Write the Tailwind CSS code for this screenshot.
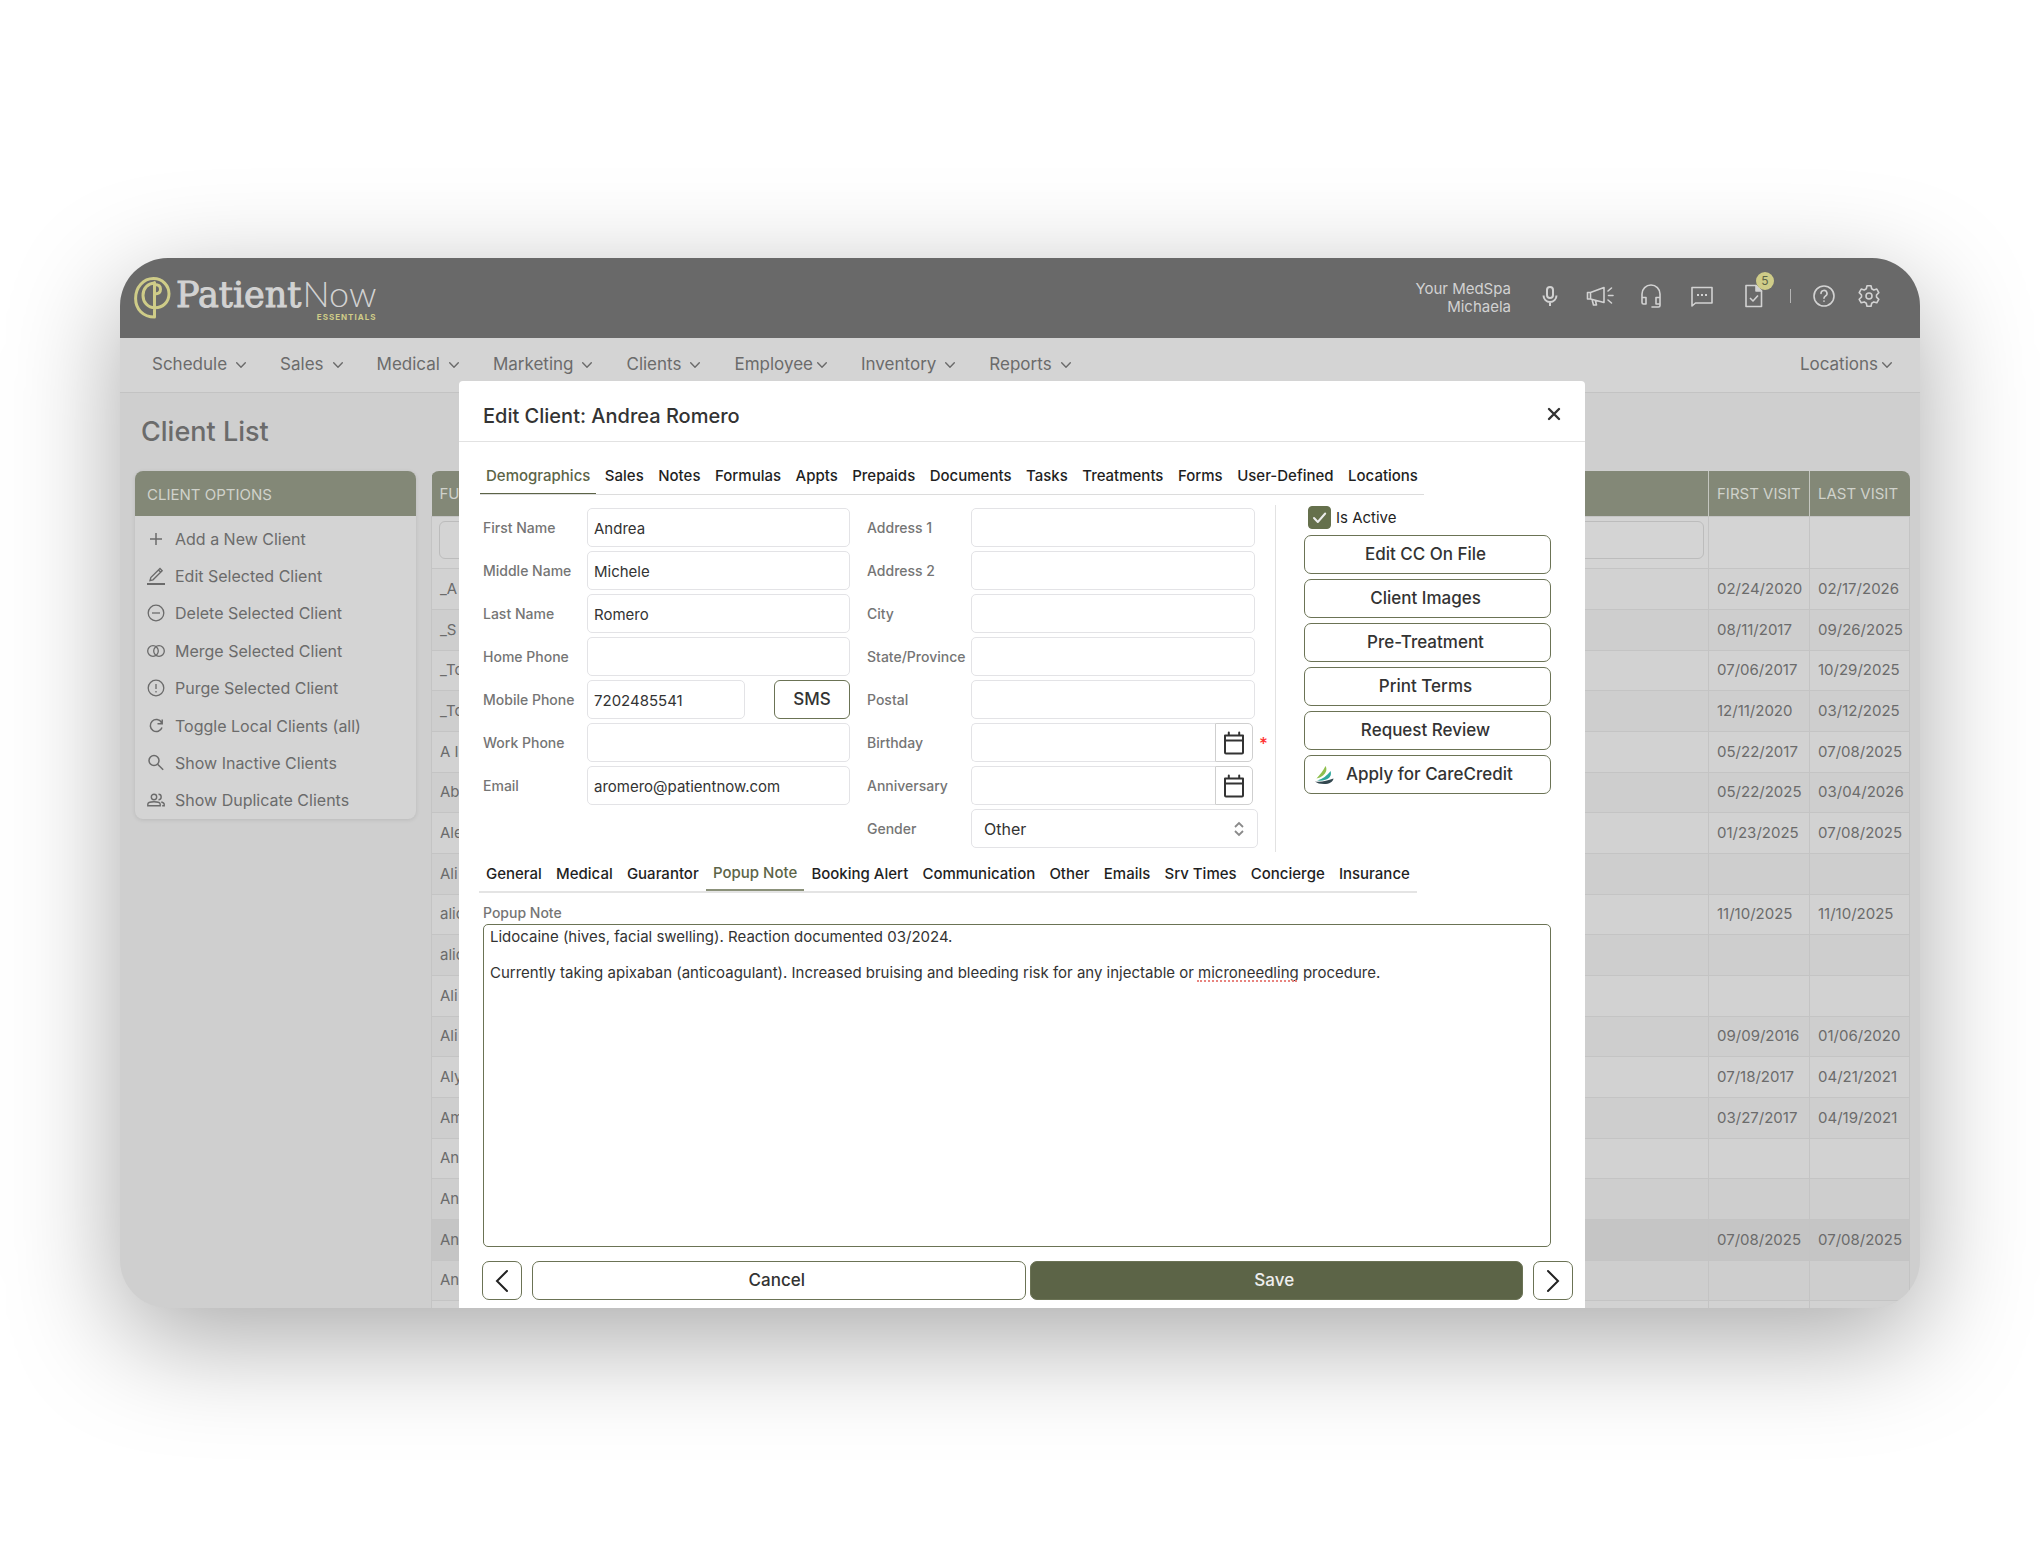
<!DOCTYPE html>
<html lang="en">
<head>
<meta charset="utf-8">
<meta name="viewport" content="width=device-width, initial-scale=1">
<title>PatientNow Essentials - Client List</title>
<script src="https://cdn.jsdelivr.net/npm/@tailwindcss/browser@4"></script>
</head>
<body class="min-h-screen bg-white px-[120px] py-[258px] font-['Inter',sans-serif] text-[#6b6b6b]">
<svg class="hidden" aria-hidden="true">
  <symbol id="chev" viewBox="0 0 10 10"><path d="M.7 2.8 5 7.2 9.3 2.8" fill="none" stroke="currentColor" stroke-width="1.4" stroke-linecap="round" stroke-linejoin="round"/></symbol>
  <symbol id="cal" viewBox="0 0 22 24"><path d="M2 4.5h18v17a1 1 0 0 1-1 1H3a1 1 0 0 1-1-1zM2 9.500h18M5.800 1.500v3M16.200 1.500v3" fill="none" stroke="currentColor" stroke-width="2" stroke-linejoin="round" stroke-linecap="round"/></symbol>
</svg>
<div class="relative h-[1050px] overflow-hidden rounded-[48px] bg-[#cfcfcf] shadow-[0_31px_110px_rgba(0,0,0,0.34)]" id="window">
  <header class="flex h-20 items-center justify-between bg-[#696969] pr-[39px] pl-[14px] text-[#d2d2d2]">
    <a href="#" class="flex items-center gap-[5px]" aria-label="PatientNow Essentials">
      <svg class="h-[42px] w-[37px]" viewBox="0 0 37 42" fill="none" stroke="#cfcc88" stroke-width="3" stroke-linecap="round" stroke-linejoin="round"><path d="M20.5 5.5V40C9 40 1.600 32 1.600 21.500C1.600 10 9.500 1.600 19.500 1.600C28.500 1.600 35 8.500 35 16.800C35 25 28.800 30.800 21 30.800C13.500 30.800 9 25 9 18.500C9 11.500 13.500 6.500 20.500 6"/><path d="M20.500 7.500C24.500 7.500 26.500 9.500 26.500 12.300C26.500 15.200 24.500 17 20.500 17"/></svg>
      <span class="flex flex-col items-end pt-[2px] whitespace-nowrap">
        <span class="flex items-baseline gap-px leading-8">
          <span class="font-['DejaVu_Serif',serif] text-[35px] [-webkit-text-stroke:1px_#d2d2d2]">Patient</span><span class="font-['Lato',sans-serif] text-[36px] font-light">Now</span>
        </span>
        <span class="pt-px text-[8px] leading-[10px] font-bold tracking-[1px] text-[#cfcc88]">ESSENTIALS</span>
      </span>
    </a>
    <div class="flex items-center">
      <p class="pr-[29px] text-right text-[15px] leading-[18px]">Your MedSpa<br>Michaela</p>
      <div class="flex items-center gap-[26px] pb-1">
        <button aria-label="Dictate" class="w-5"><svg class="mx-auto h-6 w-5" viewBox="0 0 20 24" fill="none" stroke="currentColor" stroke-width="2"><rect x="7" y="3" width="6" height="11" rx="3"/><path d="M3.500 11.500a6.500 6.500 0 0 0 13 0M10 18v4"/></svg></button>
        <button aria-label="Announcements"><svg class="h-[22px] w-[28px]" viewBox="0 0 28 22" fill="none" stroke="currentColor" stroke-width="1.600" stroke-linecap="round" stroke-linejoin="round"><path d="M1.500 7.500h3L18 2.500v15L4.500 14h-3zM4.500 7.500V14M6 14.500l1.500 5.500h3L9.500 16M22 6l3.500-3M22.500 10.500H27M22 15l3.500 3"/></svg></button>
        <button aria-label="Support"><svg class="h-6 w-[22px]" viewBox="0 0 22 24" fill="none" stroke="currentColor" stroke-width="1.600" stroke-linecap="round" stroke-linejoin="round"><path d="M2 14V10a9 9 0 0 1 18 0v11.500a1.500 1.500 0 0 1-1.500 1.500H12M2 13.500h4V20H3.500A1.500 1.500 0 0 1 2 18.500zM20 13.500h-4V20h4"/></svg></button>
        <button aria-label="Messages" class="ml-[2px]"><svg class="h-[22px] w-6" viewBox="0 0 24 22" fill="none" stroke="currentColor" stroke-width="1.600" stroke-linejoin="round"><path d="M2 2.500h20v15.500H5.500L2 21z"/><path d="M7 10h2M11 10h2M15 10h2" stroke-width="2"/></svg></button>
        <button aria-label="Tasks, 5 open" class="relative ml-1"><svg class="h-6 w-5" viewBox="0 0 20 24" fill="none" stroke="currentColor" stroke-width="1.600" stroke-linejoin="round"><path d="M12 1.500H2v21h15.500V7z"/><path d="M12 1.500V7h5.500z" fill="currentColor"/><path d="M6 14l3 3 5-5.500"/></svg><span class="absolute -top-[12px] left-[12px] size-[18px] rounded-full bg-[#cfcc88] text-center text-[12px] leading-[18px] text-[#5c6447]">5</span></button>
        <div class="flex items-center gap-[21px]">
          <span class="h-[14px] w-px bg-[#b5b5b5]"></span>
          <button aria-label="Help"><svg class="size-6" viewBox="0 0 24 24" fill="none" stroke="currentColor" stroke-width="1.600" stroke-linecap="round"><circle cx="12" cy="12" r="10"/><path d="M9 9.500a3 3 0 1 1 4.500 2.500C12.500 12.700 12 13 12 14.200M12 17v.3"/></svg></button>
          <button aria-label="Settings"><svg class="size-6" viewBox="0 0 24 24" fill="none" stroke="currentColor" stroke-width="1.600" stroke-linejoin="round"><path d="M10 1.800h4l.7 3 2.100 1.200 3-.9 2 3.500L19.500 11v2.100l2.300 2.200-2 3.500-3-.9-2.100 1.300-.7 3h-4l-.7-3-2.100-1.300-3 .9-2-3.500L4.500 13V11L2.200 8.600l2-3.500 3 .9L9.300 4.800z"/><circle cx="12" cy="12" r="3"/></svg></button>
        </div>
      </div>
    </div>
  </header>

  <nav class="flex h-[55px] items-center justify-between border-b border-[#c3c3c3] bg-[#d4d4d4] pr-[28px] pl-8 text-[17px]">
    <ul class="flex items-center gap-[34px]">
      <li><a href="#" class="flex items-center gap-[9px]">Schedule<svg class="size-[10px]"><use href="#chev"/></svg></a></li>
      <li><a href="#" class="flex items-center gap-[9px]">Sales<svg class="size-[10px]"><use href="#chev"/></svg></a></li>
      <li><a href="#" class="flex items-center gap-[9px]">Medical<svg class="size-[10px]"><use href="#chev"/></svg></a></li>
      <li><a href="#" class="flex items-center gap-[9px]">Marketing<svg class="size-[10px]"><use href="#chev"/></svg></a></li>
      <li><a href="#" class="flex items-center gap-[9px]">Clients<svg class="size-[10px]"><use href="#chev"/></svg></a></li>
      <li><a href="#" class="flex items-center gap-1">Employee<svg class="size-[10px]"><use href="#chev"/></svg></a></li>
      <li><a href="#" class="flex items-center gap-[9px]">Inventory<svg class="size-[10px]"><use href="#chev"/></svg></a></li>
      <li><a href="#" class="flex items-center gap-[9px]">Reports<svg class="size-[10px]"><use href="#chev"/></svg></a></li>
    </ul>
    <a href="#" class="flex items-center gap-1">Locations<svg class="size-[10px]"><use href="#chev"/></svg></a>
  </nav>

  <main class="pr-[10px] pl-[15px]">
    <h1 class="pt-[21px] pl-[6px] text-[27px] leading-9 font-medium">Client List</h1>
    <div class="flex items-start gap-[15px] pt-[21px]">
      <aside class="w-[281px] shrink-0 overflow-hidden rounded-lg bg-[#d4d4d4] shadow-[0_1px_4px_rgba(0,0,0,0.1)]">
        <h2 class="h-[45px] bg-[#838877] pl-3 text-[15px] leading-[47px] text-[#d0d2cb]">CLIENT OPTIONS</h2>
        <ul class="flex h-[303px] flex-col pt-1 pl-3 text-[16px] [&_a]:flex [&_a]:h-full [&_a]:items-center [&_a]:gap-[10px] [&_li]:flex-1 [&_svg]:size-[18px] [&_svg]:fill-none [&_svg]:stroke-current">
          <li><a href="#"><svg viewBox="0 0 18 18" stroke-width="1.500"><path d="M9 3v12M3 9h12"/></svg>Add a New Client</a></li>
          <li><a href="#"><svg viewBox="0 0 18 18" stroke-width="1.300"><path d="M0 17h18" stroke-width="2"/><path d="M3 13.500l.8-3L13 1.500l2.200 2.200L6 12.800zM11.500 3l2.200 2.200"/></svg>Edit Selected Client</a></li>
          <li><a href="#"><svg viewBox="0 0 18 18" stroke-width="1.300"><circle cx="9" cy="9" r="7.800"/><path d="M5 9h8"/></svg>Delete Selected Client</a></li>
          <li><a href="#"><svg viewBox="0 0 18 18" stroke-width="1.300"><circle cx="6" cy="9" r="5.300"/><circle cx="12" cy="9" r="5.300"/></svg>Merge Selected Client</a></li>
          <li><a href="#"><svg viewBox="0 0 18 18" stroke-width="1.300"><circle cx="9" cy="9" r="7.800"/><path d="M9 5v5M9 12v1.500"/></svg>Purge Selected Client</a></li>
          <li><a href="#"><svg viewBox="0 0 18 18" stroke-width="1.500"><path d="M14.500 5.500A6 6 0 1 0 15 10.500M15.200 2.500V6.800H10.500"/></svg>Toggle Local Clients (all)</a></li>
          <li><a href="#"><svg viewBox="0 0 18 18" stroke-width="1.500"><circle cx="7" cy="6.500" r="5"/><path d="M10.600 10.200l5.600 5.600"/></svg>Show Inactive Clients</a></li>
          <li><a href="#"><svg viewBox="0 0 18 18" stroke-width="1.400"><circle cx="7" cy="6" r="2.700"/><path d="M.8 14.800v-1.500C.8 11.500 4 10.800 7 10.800s6.200.7 6.200 2.500v1.500zM11.500 3.300a2.700 2.700 0 0 1 0 5.400M14.300 11c1.800.4 2.900 1.200 2.900 2.300v1.500h-2"/></svg>Show Duplicate Clients</a></li>
        </ul>
      </aside>
      <div class="flex-1 overflow-hidden rounded-t-lg">
        <table class="w-full table-fixed border-collapse text-left text-[15px]">
          <colgroup><col><col class="w-[101px]"><col class="w-[100px]"></colgroup>
          <thead>
            <tr class="h-[45px] bg-[#838877] text-[#d0d2cb] [&>th]:pt-[2px] [&>th]:pl-2 [&>th]:font-normal [&>th+th]:border-l [&>th+th]:border-[#c4c6bf]">
              <th>FULL NAME</th><th>FIRST VISIT</th><th>LAST VISIT</th>
            </tr>
            <tr class="h-[52px] bg-[#d4d4d4] [&>td]:border [&>td]:border-[#c4c4c4]"><td class="pr-1 pb-1 pl-[7px]"><input aria-label="Filter by name" class="block h-[38px] w-full rounded-md border border-[#bcbcbc] bg-transparent"></td><td></td><td></td></tr>
          </thead>
          <tbody id="rows"></tbody>
        </table>
      </div>
    </div>
  </main>

  <section role="dialog" aria-labelledby="dlg" class="absolute top-[123px] bottom-0 left-[339px] w-[1126px] rounded-t-[4px] bg-white text-[#333]">
    <div class="flex h-[61px] items-center justify-between border-b border-[#e2e2e2] pt-[9px] pr-[22px] pl-6">
      <h2 id="dlg" class="text-[20px] font-medium">Edit Client: Andrea Romero</h2>
      <button aria-label="Close" class="pb-1"><svg class="size-[18px]" viewBox="0 0 18 18" stroke="#333" stroke-width="2.400" stroke-linecap="round"><path d="M4 4l10 10M14 4 4 14"/></svg></button>
    </div>
    <div class="pr-[34px] pl-6">
      <div class="ml-[-3px] pt-[17px]">
        <div role="tablist" class="flex w-[944px] justify-between border-b border-[#dcdcdc] text-[15px] font-medium text-[#1f1f1f] [&>button]:h-[35px] [&>button]:px-[6px]">
          <button role="tab" aria-selected="true" class="-mb-px border-b border-[#5c6447] text-[#5c6447]">Demographics</button><button role="tab">Sales</button><button role="tab">Notes</button><button role="tab">Formulas</button><button role="tab">Appts</button><button role="tab">Prepaids</button><button role="tab">Documents</button><button role="tab">Tasks</button><button role="tab">Treatments</button><button role="tab">Forms</button><button role="tab">User-Defined</button><button role="tab">Locations</button>
        </div>
      </div>
      <form class="flex pt-[10px]" id="client">
        <div class="flex border-r border-[#e2e2e2] pt-[3px] pr-[17px] pb-1">
          <div class="grid auto-rows-[39px] grid-cols-[104px_263px] content-start items-center gap-y-1 text-[15px] [&_input]:h-full [&_input]:rounded-[5px] [&_input]:border [&_input]:border-[#e3e3e6] [&_input]:px-[6px] [&_input]:pt-[2px] [&_label]:text-[14px] [&_label]:font-medium [&_label]:text-[#757575]">
            <label for="fn">First Name</label><input id="fn" value="Andrea">
            <label for="mn">Middle Name</label><input id="mn" value="Michele">
            <label for="ln">Last Name</label><input id="ln" value="Romero">
            <label for="hp">Home Phone</label><input id="hp">
            <label for="mp">Mobile Phone</label><div class="flex h-full justify-between"><input id="mp" value="7202485541" class="w-[158px]"><button type="button" class="w-[76px] rounded-[6px] border border-[#6b7355] text-[17px] font-medium">SMS</button></div>
            <label for="wp">Work Phone</label><input id="wp">
            <label for="em">Email</label><input id="em" value="aromero@patientnow.com">
          </div>
          <div class="ml-[17px] grid auto-rows-[39px] grid-cols-[104px_287px] items-center gap-y-1 text-[15px] [&_input]:h-full [&_input]:rounded-[5px] [&_input]:border [&_input]:border-[#e3e3e6] [&_input]:px-[6px] [&_label]:text-[14px] [&_label]:font-medium [&_label]:text-[#757575]">
            <label for="a1">Address 1</label><input id="a1" class="w-[284px]">
            <label for="a2">Address 2</label><input id="a2" class="w-[284px]">
            <label for="ci">City</label><input id="ci" class="w-[284px]">
            <label for="st">State/Province</label><input id="st" class="w-[284px]">
            <label for="po">Postal</label><input id="po" class="w-[284px]">
            <label for="bd">Birthday</label>
            <div class="relative flex h-full"><input id="bd" class="w-[244px] rounded-r-none! border-r-0!"><button type="button" aria-label="Pick birthday" class="flex w-[38px] items-center justify-center rounded-r-[5px] border border-[#cfcfcf]"><svg class="h-6 w-[22px]"><use href="#cal"/></svg></button><span class="absolute top-[9px] left-[288px] text-[17px] leading-6 font-medium text-[#f33]">*</span></div>
            <label for="an">Anniversary</label>
            <div class="flex h-full"><input id="an" class="w-[244px] rounded-r-none! border-r-0!"><button type="button" aria-label="Pick anniversary" class="flex w-[38px] items-center justify-center rounded-r-[5px] border border-[#cfcfcf]"><svg class="h-6 w-[22px]"><use href="#cal"/></svg></button></div>
            <label for="ge">Gender</label>
            <div class="relative h-full"><select id="ge" class="h-full w-full appearance-none rounded-[5px] border border-[#e3e3e6] px-3 text-[16px]"><option>Other</option></select><svg class="pointer-events-none absolute top-[12px] right-[13px] h-4 w-3" viewBox="0 0 12 16" fill="none" stroke="#8a8a8a" stroke-width="1.800"><path d="M2 6l4-4 4 4M2 10l4 4 4-4"/></svg></div>
          </div>
        </div>
        <div class="ml-[28px] w-[250px] [&>button]:mb-[5px] [&>button]:h-[39px] [&>button]:w-full [&>button]:rounded-[7px] [&>button]:border [&>button]:border-[#6b7355] [&>button]:pr-[10px] [&>button]:pl-[6px] [&>button]:text-[17px] [&>button]:font-medium">
          <label class="flex h-[30px] items-start gap-[5px] pt-px pl-1 text-[15px] leading-[23px] text-[#1f1f1f]"><span class="relative size-[23px]"><input type="checkbox" checked class="peer block size-[23px] appearance-none rounded-[4px] border border-[#65704c] checked:bg-[#65704c]"><svg class="pointer-events-none absolute inset-0 hidden size-[23px] peer-checked:block" viewBox="0 0 23 23" fill="none" stroke="#ececec" stroke-width="2" stroke-linecap="round" stroke-linejoin="round"><path d="M6 12l3.800 4L17.200 7.500"/></svg></span>Is Active</label>
          <button type="button">Edit CC On File</button>
          <button type="button">Client Images</button>
          <button type="button">Pre-Treatment</button>
          <button type="button">Print Terms</button>
          <button type="button">Request Review</button>
          <button type="button" class="flex items-center gap-3 pl-[9px]!"><svg class="h-5 w-[20px]" viewBox="0 0 20 20"><path d="M2.500 13.500C6 9.500 9.500 5.500 11.500 1c2 3.500.5 7-2.500 9.500-2 1.600-4 2.500-6.500 3z" fill="#8fbf4d"/><path d="M3 15.500c6-1.500 10-5 13.500-9.500 1.500 4.500-1 7.500-5 8.800-2.600.8-5.500 1-8.500.7z" fill="#2fa79b"/><path d="M1 16.500c6 .8 12-.5 18.500-3-.5 3.500-4 5.500-9.500 5.500-4 0-7-.8-9-2.500z" fill="#33474f"/></svg>Apply for CareCredit</button>
        </div>
      </form>
      <div class="ml-[-4px] pt-[6px]">
        <div role="tablist" class="flex w-[938px] justify-between border-b-2 border-[#e4e4e4] text-[15px] font-medium text-[#1f1f1f] [&>button]:h-[33px] [&>button]:px-[7px]">
          <button role="tab">General</button><button role="tab">Medical</button><button role="tab">Guarantor</button><button role="tab" aria-selected="true" class="-mb-[2px] border-b-2 border-[#8b917a] text-[#5c6447]">Popup Note</button><button role="tab">Booking Alert</button><button role="tab">Communication</button><button role="tab">Other</button><button role="tab">Emails</button><button role="tab">Srv Times</button><button role="tab">Concierge</button><button role="tab">Insurance</button>
        </div>
      </div>
      <label for="note" class="block pt-[10px] pb-px text-[14px] leading-5 font-medium text-[#757575]">Popup Note</label>
      <div class="relative">
        <textarea id="note" spellcheck="false" class="block h-[323px] w-full resize-none rounded-[5px] border border-[#6b7355] px-[6px] py-[3px] text-[15px] leading-[18px]">Lidocaine (hives, facial swelling). Reaction documented 03/2024.

Currently taking apixaban (anticoagulant). Increased bruising and bleeding risk for any injectable or microneedling procedure.</textarea>
        <span class="absolute top-[56px] left-[714px] w-[100px] border-b-2 border-dotted border-[#e8837e]"></span>
      </div>
    </div>
    <div class="flex gap-[10px] pt-[14px] pr-3 pl-[23px] [&_button]:h-[39px] [&_button]:rounded-[7px] [&_button]:border [&_button]:border-[#6b7355] [&_button]:text-[17px] [&_button]:font-medium">
      <button aria-label="Previous client" class="w-10 shrink-0"><svg class="mx-auto h-6 w-[14px]" viewBox="0 0 14 24" fill="none" stroke="#222" stroke-width="2" stroke-linecap="round"><path d="M12 2 2 12l10 10"/></svg></button>
      <div class="flex flex-1 gap-1"><button class="flex-1 pr-1">Cancel</button><button class="flex-1 bg-[#5c6447] pr-1 text-[#eee]">Save</button></div>
      <button aria-label="Next client" class="w-10 shrink-0"><svg class="mx-auto h-6 w-[14px]" viewBox="0 0 14 24" fill="none" stroke="#222" stroke-width="2" stroke-linecap="round"><path d="m2 2 10 10L2 22"/></svg></button>
    </div>
  </section>
</div>
<script>
const clients = [["_A","02/24/2020","02/17/2026"],["_S","08/11/2017","09/26/2025"],["_To","07/06/2017","10/29/2025"],["_To","12/11/2020","03/12/2025"],["A I","05/22/2017","07/08/2025"],["Ab","05/22/2025","03/04/2026"],["Ale","01/23/2025","07/08/2025"],["Ali","",""],["alic","11/10/2025","11/10/2025"],["alic","",""],["Ali","",""],["Ali","09/09/2016","01/06/2020"],["Aly","07/18/2017","04/21/2021"],["Am","03/27/2017","04/19/2021"],["An","",""],["An","",""],["An","07/08/2025","07/08/2025"],["An","",""],["","",""]];
document.getElementById("rows").innerHTML = clients.map((c, i) => `<tr class="h-[41px] nth-[3n]:h-[40px] [&>td]:border [&>td]:border-[#c4c4c4] [&>td]:pt-px [&>td]:pl-2 ${i === 16 ? "bg-[#c5c5c5]" : i % 2 ? "bg-[#cecece]" : "bg-[#d2d2d2]"}">${c.map(t => `<td>${t}</td>`).join("")}</tr>`).join("");
</script>
</body>
</html>
